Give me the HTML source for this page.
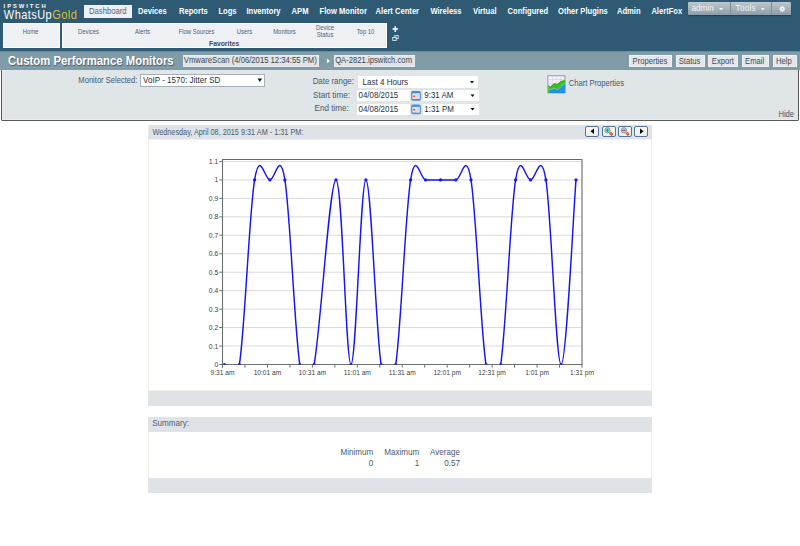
<!DOCTYPE html>
<html><head><meta charset="utf-8">
<style>
*{box-sizing:border-box}
html,body{margin:0;padding:0;width:800px;height:546px;overflow:hidden;background:#fff;font-family:"Liberation Sans",sans-serif}
.a{position:absolute;white-space:nowrap}
#hdr{position:absolute;left:0;top:0;width:800px;height:51px;background:#2e5a74}
.nav{position:absolute;top:7.2px;font-weight:bold;color:#fff;font-size:7.6px;line-height:7.6px;transform:scaleY(1.2);transform-origin:0 0}
.sub{position:absolute;font-size:5.9px;color:#4c6276;line-height:7px;text-align:center;transform:scaleY(1.2);transform-origin:0 0}
.fav{position:absolute;top:22.5px;height:25px;background:#eff0f4;border:1px solid #fff}
#tbar{position:absolute;left:0;top:51px;width:800px;height:19px;background:#819ca9;border-top:1px solid #6e8a9a}
.tb{position:absolute;top:54.5px;height:12.5px;background:#e3e6e9;border:1px solid #eef0f2;color:#3d4a55;font-size:7.6px;line-height:10.5px;text-align:center}
#form{position:absolute;left:1px;top:70px;width:798px;height:50.8px;background:#e0e5e8;border:1px solid #555;border-bottom:1.6px solid #5c5c5c;border-top:none;border-radius:0 0 1.5px 1.5px;box-shadow:inset 1px -1px 0 #e8ecef}
.lbl{position:absolute;font-size:8px;color:#4a5560;line-height:10px}
.inp{position:absolute;background:#fff;font-size:8px;color:#222;line-height:11px}
.band{position:absolute;left:148px;width:504px;background:#dfe3e7}
.body{position:absolute;left:148px;width:504px;background:#fff;border:1px solid #f4f1e7}
.cbtn{position:absolute;top:126.1px;width:14.2px;height:10.6px;border:1px solid #56749c;border-radius:2px;background:linear-gradient(#f8f7f2,#efede4)}
</style></head><body>
<div id="hdr"></div>
<!-- logo -->
<div class="a" style="left:3.6px;top:3.3px;font-size:5.8px;font-weight:bold;color:#fff;letter-spacing:1.95px;line-height:7px">IPSWITCH</div>
<div class="a" style="left:3.8px;top:7.8px;font-size:11px;color:#fff;letter-spacing:0.45px;line-height:12px;transform:scaleY(1.1);transform-origin:0 0">WhatsUp<span style="color:#dcc02c">Gold</span></div>
<!-- nav -->
<div class="a" style="left:84px;top:5px;width:48px;height:12.6px;background:#eef0f3"></div>
<div class="a" style="left:89px;top:6.8px;font-size:7.7px;color:#52677a;line-height:7.7px;transform:scaleY(1.1);transform-origin:0 0">Dashboard</div>
<div class="nav" style="left:138px">Devices</div>
<div class="nav" style="left:179px">Reports</div>
<div class="nav" style="left:218.4px">Logs</div>
<div class="nav" style="left:246.4px">Inventory</div>
<div class="nav" style="left:291.6px">APM</div>
<div class="nav" style="left:319.6px">Flow Monitor</div>
<div class="nav" style="left:375.6px">Alert Center</div>
<div class="nav" style="left:430.4px">Wireless</div>
<div class="nav" style="left:473px">Virtual</div>
<div class="nav" style="left:507.6px">Configured</div>
<div class="nav" style="left:558px">Other Plugins</div>
<div class="nav" style="left:617px">Admin</div>
<div class="nav" style="left:651.4px">AlertFox</div>
<!-- admin tools group -->
<div class="a" style="left:688px;top:1.9px;width:103px;height:13.6px;background:linear-gradient(#bdc8cf,#8d9da7);border-radius:1px;box-shadow:0 1px 1px rgba(0,0,0,.3)"></div>
<div class="a" style="left:729.5px;top:2px;width:1px;height:13.4px;background:#7e8d96"></div>
<div class="a" style="left:771px;top:2px;width:1px;height:13.4px;background:#7e8d96"></div>
<div class="a" style="left:691.4px;top:5.3px;font-size:8.2px;color:#f2f6f9;line-height:8.2px">admin</div>
<div class="a" style="left:735.6px;top:5.3px;font-size:8.2px;color:#f2f6f9;line-height:8.2px;letter-spacing:0.2px">Tools</div>
<svg class="a" style="left:0;top:0" width="800" height="20"><g fill="#f4f6f8"><path d="M718.9 8.1h4.4l-2.2 2.1z"/><path d="M760.7 8h4.2l-2.1 2.3z"/></g>
<g transform="translate(782.3,9)"><circle r="2.1" fill="#f4f6f8"/><path d="M0 -2.9V2.9M-2.9 0H2.9M-2.05 -2.05L2.05 2.05M-2.05 2.05L2.05 -2.05" stroke="#f4f6f8" stroke-width="1.1"/><circle r="0.8" fill="#a8b6bf"/></g></svg>
<!-- favorites -->
<div class="fav" style="left:3px;width:56.5px"></div>
<div class="fav" style="left:61.5px;width:325.5px"></div>
<div class="sub" style="left:10px;width:41px;top:28px">Home</div>
<div class="sub" style="left:68px;width:41px;top:28px">Devices</div>
<div class="sub" style="left:122px;width:41px;top:28px">Alerts</div>
<div class="sub" style="left:176px;width:41px;top:28px">Flow Sources</div>
<div class="sub" style="left:224px;width:41px;top:28px">Users</div>
<div class="sub" style="left:264px;width:41px;top:28px">Monitors</div>
<div class="sub" style="left:304.5px;width:41px;top:24.6px;line-height:5.8px">Device<br>Status</div>
<div class="sub" style="left:345px;width:41px;top:28px">Top 10</div>
<div class="a" style="left:209px;top:39.5px;font-size:6.8px;font-weight:bold;color:#3a4a5a;line-height:8px">Favorites</div>
<svg class="a" style="left:392px;top:25.5px" width="7" height="7"><path d="M3.3 0.3v5.6M0.5 3.1h5.6" stroke="#fff" stroke-width="1.5"/></svg>
<svg class="a" style="left:392px;top:34.5px" width="8" height="8"><rect x="2.8" y="0.6" width="3.4" height="3" fill="none" stroke="#e8eef2" stroke-width="0.9"/><rect x="0.8" y="2.4" width="3.4" height="3" fill="#2e5a74" stroke="#e8eef2" stroke-width="0.9"/></svg>
<!-- title bar -->
<div id="tbar"></div>
<div class="a" style="left:8.07px;top:55.91px;font-size:11.33px;line-height:11.33px;color:#fff;font-weight:bold;transform:scaleY(1.05);transform-origin:0 0;text-shadow:0.7px 0.7px 0.8px #3e5464">Custom Performance Monitors</div>
<div class="a" style="left:183.3px;top:54.6px;width:135.7px;height:12.2px;background:#e0e4e7;border:1px solid #e9ecee"></div>
<div class="a" style="left:183.84px;top:56.32px;font-size:7.7px;line-height:7.7px;color:#39444e;font-weight:normal;transform:scaleY(1.13);transform-origin:0 0">VmwareScan (4/06/2015 12:34:55 PM)</div>
<svg class="a" style="left:326px;top:57.5px" width="6" height="6"><path d="M1 0.8l3 2.2-3 2.2z" fill="#fff"/></svg>
<div class="a" style="left:334px;top:54.6px;width:81px;height:12.2px;background:#e0e4e7;border:1px solid #e9ecee"></div>
<div class="a" style="left:335.14px;top:56.32px;font-size:7.7px;line-height:7.7px;color:#39444e;font-weight:normal;transform:scaleY(1.13);transform-origin:0 0">QA-2821.ipswitch.com</div>
<div class="a" style="left:629px;top:54.5px;width:42.8px;height:12.6px;background:#e3e7ea;border:1px solid #eef0f2"></div>
<div class="a" style="left:632.54px;top:56.54px;font-size:7.65px;line-height:7.65px;color:#3c4a56;font-weight:normal;transform:scaleY(1.12);transform-origin:0 0">Properties</div>
<div class="a" style="left:675.6px;top:54.5px;width:29px;height:12.6px;background:#e3e7ea;border:1px solid #eef0f2"></div>
<div class="a" style="left:678.74px;top:56.54px;font-size:7.65px;line-height:7.65px;color:#3c4a56;font-weight:normal;transform:scaleY(1.12);transform-origin:0 0">Status</div>
<div class="a" style="left:708.3px;top:54.5px;width:29.5px;height:12.6px;background:#e3e7ea;border:1px solid #eef0f2"></div>
<div class="a" style="left:711.84px;top:56.54px;font-size:7.65px;line-height:7.65px;color:#3c4a56;font-weight:normal;transform:scaleY(1.12);transform-origin:0 0">Export</div>
<div class="a" style="left:741.6px;top:54.5px;width:27px;height:12.6px;background:#e3e7ea;border:1px solid #eef0f2"></div>
<div class="a" style="left:745.04px;top:56.54px;font-size:7.65px;line-height:7.65px;color:#3c4a56;font-weight:normal;transform:scaleY(1.12);transform-origin:0 0">Email</div>
<div class="a" style="left:772.5px;top:54.5px;width:24px;height:12.6px;background:#e3e7ea;border:1px solid #eef0f2"></div>
<div class="a" style="left:776.04px;top:56.54px;font-size:7.65px;line-height:7.65px;color:#3c4a56;font-weight:normal;transform:scaleY(1.12);transform-origin:0 0">Help</div>
<!-- form -->
<div id="form"></div>
<div class="a" style="left:78.34px;top:75.81px;font-size:7.6px;line-height:7.6px;color:#4a5866;font-weight:normal;transform:scaleY(1.15);transform-origin:0 0">Monitor Selected:</div>
<div class="a" style="left:140.3px;top:74.3px;width:124.7px;height:12.4px;background:#fff;border:1px solid #a6aeb6"></div>
<div class="a" style="left:143.12px;top:76.02px;font-size:8.05px;line-height:8.05px;color:#2a3036;font-weight:normal;transform:scaleY(1.12);transform-origin:0 0">VoIP - 1570: Jitter SD</div>
<svg class="a" style="left:257px;top:77.5px" width="6" height="5"><path d="M0.6 0.5h4.4l-2.2 3.4z" fill="#111"/></svg>
<div class="a" style="left:312.63px;top:77.40px;font-size:7.9px;line-height:7.9px;color:#4a5866;font-weight:normal;transform:scaleY(1.2);transform-origin:0 0">Date range:</div>
<div class="a" style="left:358px;top:75.6px;width:120px;height:12px;background:#fff"></div>
<div class="a" style="left:362.52px;top:78.41px;font-size:8.05px;line-height:8.05px;color:#2a3036;font-weight:normal;transform:scaleY(1.17);transform-origin:0 0">Last 4 Hours</div>
<div class="a" style="left:313.01px;top:90.50px;font-size:8.1px;line-height:8.1px;color:#4a5866;font-weight:normal;transform:scaleY(1.17);transform-origin:0 0">Start time:</div>
<div class="a" style="left:357.2px;top:89.6px;width:52.8px;height:11.2px;background:#fff"></div>
<div class="a" style="left:423px;top:89.5px;width:55.5px;height:11.5px;background:#fff"></div>
<div class="a" style="left:358.52px;top:90.83px;font-size:7.95px;line-height:7.95px;color:#2a3036;font-weight:normal;transform:scaleY(1.17);transform-origin:0 0">04/08/2015</div>
<div class="a" style="left:424.32px;top:91.03px;font-size:7.95px;line-height:7.95px;color:#2a3036;font-weight:normal;transform:scaleY(1.17);transform-origin:0 0">9:31 AM</div>
<div class="a" style="left:314.51px;top:104.00px;font-size:8.1px;line-height:8.1px;color:#4a5866;font-weight:normal;transform:scaleY(1.17);transform-origin:0 0">End time:</div>
<div class="a" style="left:357.2px;top:103.5px;width:52.8px;height:11.3px;background:#fff"></div>
<div class="a" style="left:423px;top:103.5px;width:55.5px;height:11.5px;background:#fff"></div>
<div class="a" style="left:358.52px;top:104.63px;font-size:7.95px;line-height:7.95px;color:#2a3036;font-weight:normal;transform:scaleY(1.17);transform-origin:0 0">04/08/2015</div>
<div class="a" style="left:424.32px;top:105.03px;font-size:7.95px;line-height:7.95px;color:#2a3036;font-weight:normal;transform:scaleY(1.17);transform-origin:0 0">1:31 PM</div>
<svg class="a" style="left:0;top:0" width="800" height="120">
<g fill="#0a0a20"><path d="M470 81h4l-2 2.5z"/><path d="M470.5 94.5h4l-2 2.5z"/><path d="M470.5 108h4l-2 2.5z"/></g>
<g><rect x="411.6" y="91.8" width="9.2" height="9" rx="1.6" fill="#48505a" opacity="0.55"/><rect x="411.2" y="91" width="9.4" height="9.2" rx="1.6" fill="#3a92e6"/><rect x="412.3" y="93.4" width="7.3" height="5.6" fill="#ece6f2"/><rect x="416.3" y="93.4" width="3.3" height="5.6" fill="#d4dcf2"/><circle cx="414.2" cy="96.2" r="1" fill="#ff3a0e"/>
<rect x="411.6" y="105.3" width="9.2" height="9" rx="1.6" fill="#48505a" opacity="0.55"/><rect x="411.2" y="104.5" width="9.4" height="9.2" rx="1.6" fill="#3a92e6"/><rect x="412.3" y="106.9" width="7.3" height="5.6" fill="#ece6f2"/><rect x="416.3" y="106.9" width="3.3" height="5.6" fill="#d4dcf2"/><circle cx="414.2" cy="109.7" r="1" fill="#ff3a0e"/></g>
<g><rect x="547.9" y="75.7" width="17" height="17.2" fill="#f6f2fb" stroke="#9f97c2" stroke-width="1.1"/>
<path d="M552.3 75.7v17M556.7 75.7v17M560.7 75.7v17M547.9 79.5h17M547.9 83.5h17" stroke="#d6cfe6" stroke-width="0.7"/>
<path d="M548.2 93V85.1l2 1.6 4.1-3.8 2.8 1.2 4-3.4 4.1-0.6V93z" fill="#3cc41c"/>
<path d="M548.2 86l2 1.6 4.1-3.8 2.8 1.2 4-3.4 4.1-0.6" fill="none" stroke="#22a810" stroke-width="0.8"/>
<path d="M549.4 93V89.5l5.3-1 2.8 1.4 3.6-3.6 4.1-3.2V93z" fill="#2a8ee6"/>
<path d="M549.4 89.5l5.3-1 2.8 1.4 3.6-3.6 4.1-3.2" fill="none" stroke="#8cc8f4" stroke-width="0.7"/></g>
</svg>
<div class="a" style="left:568.74px;top:79.37px;font-size:7.6px;line-height:7.6px;color:#485868;font-weight:normal;transform:scaleY(1.1);transform-origin:0 0">Chart Properties</div>
<div class="a" style="left:778.44px;top:110.31px;font-size:7.6px;line-height:7.6px;color:#3a5670;font-weight:normal;transform:scaleY(1.15);transform-origin:0 0">Hide</div>
<!-- chart panel -->
<div class="band" style="top:124.5px;height:14.8px;border-left:1px solid #e6eaed"></div>
<div class="a" style="left:152.4px;top:127.2px;font-size:7.3px;color:#4a5a6c;line-height:10px;transform:scaleY(1.15);transform-origin:0 0">Wednesday, April 08, 2015 9:31 AM - 1:31 PM:</div>
<div class="cbtn" style="left:585.3px"></div>
<div class="cbtn" style="left:601.5px"></div>
<div class="cbtn" style="left:618px"></div>
<div class="cbtn" style="left:634.3px"></div>
<svg class="a" style="left:0;top:0" width="800" height="140">
<path d="M590.5 131.2l3.5-2.7v5.4z" fill="#000"/><path d="M643.5 131.2l-3.5-2.7v5.4z" fill="#000"/>
<circle cx="607.5" cy="130.3" r="2.7" fill="#a8d4ee" stroke="#5a80a0" stroke-width="0.7"/><path d="M605.9 130.3h3.2M607.5 128.7v3.2" stroke="#10b830" stroke-width="1.1"/><path d="M610 132.6l2.4 2.4" stroke="#e8481c" stroke-width="2.6"/><path d="M610.4 133l1.2 1.2" stroke="#f8c040" stroke-width="0.8"/>
<circle cx="623.9" cy="130.3" r="2.7" fill="#a8d4ee" stroke="#5a80a0" stroke-width="0.7"/><path d="M622.3 130.3h3.2" stroke="#e02828" stroke-width="1.1"/><path d="M626.4 132.6l2.4 2.4" stroke="#e8481c" stroke-width="2.6"/><path d="M626.8 133l1.2 1.2" stroke="#f8c040" stroke-width="0.8"/>
</svg>
<div class="body" style="top:139.3px;height:251.5px"></div>
<div class="band" style="top:390.8px;height:15.1px"></div>
<!-- summary -->
<div class="band" style="top:417.1px;height:15.4px"></div>
<div class="a" style="left:152.2px;top:418.1px;font-size:8.1px;color:#4a5e72;line-height:10px;transform:scaleY(1.2);transform-origin:0 0">Summary:</div>
<div class="body" style="top:432.5px;height:46px;border-top:none"></div>
<div class="band" style="top:478px;height:14.8px"></div>
<div class="a" style="left:330px;top:447.4px;width:43.3px;text-align:right;font-size:8.1px;color:#4a5a6e;line-height:9.4px;transform:scaleY(1.2);transform-origin:0 0">Minimum<br>0</div>
<div class="a" style="left:376px;top:447.4px;width:43.3px;text-align:right;font-size:8.1px;color:#4a5a6e;line-height:9.4px;transform:scaleY(1.2);transform-origin:0 0">Maximum<br>1</div>
<div class="a" style="left:417px;top:447.4px;width:43px;text-align:right;font-size:8.1px;color:#4a5a6e;line-height:9.4px;transform:scaleY(1.2);transform-origin:0 0">Average<br>0.57</div>
<svg width="800" height="546" style="position:absolute;left:0;top:0">
<defs><clipPath id="pc"><rect x="222.5" y="150" width="360" height="214.5"/></clipPath></defs>
<g stroke="#dadada" stroke-width="1"><line x1="223" x2="581.3" y1="346.04" y2="346.04"/><line x1="223" x2="581.3" y1="327.58" y2="327.58"/><line x1="223" x2="581.3" y1="309.12" y2="309.12"/><line x1="223" x2="581.3" y1="290.66" y2="290.66"/><line x1="223" x2="581.3" y1="272.20" y2="272.20"/><line x1="223" x2="581.3" y1="253.74" y2="253.74"/><line x1="223" x2="581.3" y1="235.28" y2="235.28"/><line x1="223" x2="581.3" y1="216.82" y2="216.82"/><line x1="223" x2="581.3" y1="198.36" y2="198.36"/><line x1="223" x2="581.3" y1="179.90" y2="179.90"/><line x1="223" x2="581.3" y1="161.44" y2="161.44"/></g>
<g stroke="#6a7070" stroke-width="1"><line x1="219.3" x2="222.5" y1="364.50" y2="364.50"/><line x1="219.3" x2="222.5" y1="346.04" y2="346.04"/><line x1="219.3" x2="222.5" y1="327.58" y2="327.58"/><line x1="219.3" x2="222.5" y1="309.12" y2="309.12"/><line x1="219.3" x2="222.5" y1="290.66" y2="290.66"/><line x1="219.3" x2="222.5" y1="272.20" y2="272.20"/><line x1="219.3" x2="222.5" y1="253.74" y2="253.74"/><line x1="219.3" x2="222.5" y1="235.28" y2="235.28"/><line x1="219.3" x2="222.5" y1="216.82" y2="216.82"/><line x1="219.3" x2="222.5" y1="198.36" y2="198.36"/><line x1="219.3" x2="222.5" y1="179.90" y2="179.90"/><line x1="219.3" x2="222.5" y1="161.44" y2="161.44"/><line x1="222.50" x2="222.50" y1="364.5" y2="367.6"/><line x1="244.97" x2="244.97" y1="364.5" y2="367.6"/><line x1="267.44" x2="267.44" y1="364.5" y2="367.6"/><line x1="289.91" x2="289.91" y1="364.5" y2="367.6"/><line x1="312.38" x2="312.38" y1="364.5" y2="367.6"/><line x1="334.84" x2="334.84" y1="364.5" y2="367.6"/><line x1="357.31" x2="357.31" y1="364.5" y2="367.6"/><line x1="379.78" x2="379.78" y1="364.5" y2="367.6"/><line x1="402.25" x2="402.25" y1="364.5" y2="367.6"/><line x1="424.72" x2="424.72" y1="364.5" y2="367.6"/><line x1="447.19" x2="447.19" y1="364.5" y2="367.6"/><line x1="469.66" x2="469.66" y1="364.5" y2="367.6"/><line x1="492.12" x2="492.12" y1="364.5" y2="367.6"/><line x1="514.59" x2="514.59" y1="364.5" y2="367.6"/><line x1="537.06" x2="537.06" y1="364.5" y2="367.6"/><line x1="559.53" x2="559.53" y1="364.5" y2="367.6"/><line x1="582.00" x2="582.00" y1="364.5" y2="367.6"/></g>
<line x1="222.5" y1="159.5" x2="582" y2="159.5" stroke="#686868" stroke-width="1.2"/>
<line x1="582" y1="159" x2="582" y2="365" stroke="#8a8a8a" stroke-width="1.4"/>
<line x1="222.5" y1="159" x2="222.5" y2="367.6" stroke="#6a7272" stroke-width="1.1"/>
<line x1="222" y1="364.5" x2="582.5" y2="364.5" stroke="#6a7272" stroke-width="1.1"/>
<g clip-path="url(#pc)">
<path d="M224.4,364.5 C227.03,364.5 234.1,396.89 239.4,364.5 C244.7,332.11 249.25,212.29 254.6,179.9 C259.95,147.51 264.58,179.9 269.9,179.9 C275.22,179.9 279.65,147.51 284.9,179.9 C290.15,212.29 294.68,332.11 299.8,364.5 C304.92,396.89 307.75,396.89 314.1,364.5 C320.45,332.11 329.53,179.9 336,179.9 C342.47,179.9 345.75,364.5 351,364.5 C356.25,364.5 360.62,179.9 365.9,179.9 C371.18,179.9 375.87,332.11 381.1,364.5 C386.33,396.89 390.52,396.89 395.7,364.5 C400.88,332.11 405.35,212.29 410.6,179.9 C415.85,147.51 420.34,179.9 425.6,179.9 C430.86,179.9 435.28,179.9 440.6,179.9 C445.92,179.9 450.57,179.9 455.9,179.9 C461.23,179.9 465.72,147.51 471,179.9 C476.28,212.29 480.79,332.11 486,364.5 C491.21,396.89 495.51,396.89 500.7,364.5 C505.89,332.11 510.35,212.29 515.6,179.9 C520.85,147.51 525.28,179.9 530.6,179.9 C535.92,179.9 540.55,147.51 545.9,179.9 C551.25,212.29 555.82,364.5 561.1,364.5 C566.38,364.5 573.39,212.29 576,179.9" fill="none" stroke="#1414f6" stroke-width="1.45"/>
<g fill="#1414f6"><circle cx="224.4" cy="364.5" r="1.6"/><circle cx="239.4" cy="364.5" r="1.6"/><circle cx="254.6" cy="179.9" r="1.6"/><circle cx="269.9" cy="179.9" r="1.6"/><circle cx="284.9" cy="179.9" r="1.6"/><circle cx="299.8" cy="364.5" r="1.6"/><circle cx="314.1" cy="364.5" r="1.6"/><circle cx="336" cy="179.9" r="1.6"/><circle cx="351" cy="364.5" r="1.6"/><circle cx="365.9" cy="179.9" r="1.6"/><circle cx="381.1" cy="364.5" r="1.6"/><circle cx="395.7" cy="364.5" r="1.6"/><circle cx="410.6" cy="179.9" r="1.6"/><circle cx="425.6" cy="179.9" r="1.6"/><circle cx="440.6" cy="179.9" r="1.6"/><circle cx="455.9" cy="179.9" r="1.6"/><circle cx="471" cy="179.9" r="1.6"/><circle cx="486" cy="364.5" r="1.6"/><circle cx="500.7" cy="364.5" r="1.6"/><circle cx="515.6" cy="179.9" r="1.6"/><circle cx="530.6" cy="179.9" r="1.6"/><circle cx="545.9" cy="179.9" r="1.6"/><circle cx="561.1" cy="364.5" r="1.6"/><circle cx="576" cy="179.9" r="1.6"/></g>
</g>
<g font-family="Liberation Sans" font-size="6.8" fill="#404040" text-anchor="end"><text transform="translate(218.3,367.00) scale(1,1.18)">0</text><text transform="translate(218.3,348.54) scale(1,1.18)">0.1</text><text transform="translate(218.3,330.08) scale(1,1.18)">0.2</text><text transform="translate(218.3,311.62) scale(1,1.18)">0.3</text><text transform="translate(218.3,293.16) scale(1,1.18)">0.4</text><text transform="translate(218.3,274.70) scale(1,1.18)">0.5</text><text transform="translate(218.3,256.24) scale(1,1.18)">0.6</text><text transform="translate(218.3,237.78) scale(1,1.18)">0.7</text><text transform="translate(218.3,219.32) scale(1,1.18)">0.8</text><text transform="translate(218.3,200.86) scale(1,1.18)">0.9</text><text transform="translate(218.3,182.40) scale(1,1.18)">1</text><text transform="translate(218.3,163.94) scale(1,1.18)">1.1</text></g>
<g font-family="Liberation Sans" font-size="6.6" fill="#404040" text-anchor="middle"><text transform="translate(222.50,374.9) scale(1,1.15)">9:31 am</text><text transform="translate(267.44,374.9) scale(1,1.15)">10:01 am</text><text transform="translate(312.38,374.9) scale(1,1.15)">10:31 am</text><text transform="translate(357.31,374.9) scale(1,1.15)">11:01 am</text><text transform="translate(402.25,374.9) scale(1,1.15)">11:31 am</text><text transform="translate(447.19,374.9) scale(1,1.15)">12:01 pm</text><text transform="translate(492.12,374.9) scale(1,1.15)">12:31 pm</text><text transform="translate(537.06,374.9) scale(1,1.15)">1:01 pm</text><text transform="translate(582.00,374.9) scale(1,1.15)">1:31 pm</text></g>
</svg>
</body></html>
